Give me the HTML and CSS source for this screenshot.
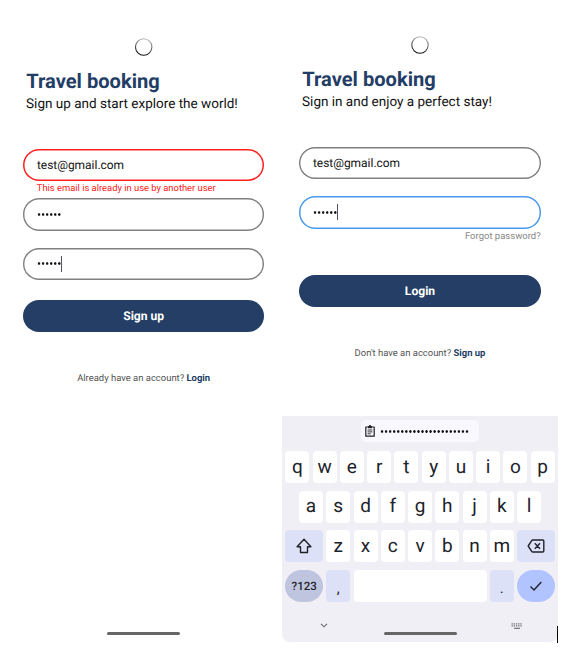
FILE: index.html
```html
<!DOCTYPE html>
<html lang="en">
<head>
<meta charset="utf-8">
<title>Travel booking</title>
<link rel="stylesheet" href="styles.css">
</head>
<body>
<main class="screens">
  <section class="screen signup">
    <svg class="spinner" viewBox="0 0 18 18"><defs><linearGradient id="ring" x1="0.7" y1="0" x2="0.4" y2="1"><stop offset="0" stop-color="#bbb"/><stop offset="1" stop-color="#111"/></linearGradient></defs><circle cx="8.7" cy="9" r="8.2" fill="none" stroke="url(#ring)" stroke-width="1.1"/></svg>
    <h1><span>Travel booking</span></h1>
    <p class="subtitle">Sign up and start explore the world!</p>
    <form class="form">
      <div class="field invalid"><span>test@gmail.com</span></div>
      <p class="error">This email is already in use by another user</p>
      <div class="field"><i class="dots"></i></div>
      <div class="field confirm"><i class="dots"></i><i class="caret"></i></div>
      <div class="button">Sign up</div>
    </form>
    <p class="switch">Already have an account? <b>Login</b></p>
    <i class="home"></i>
  </section>
  <section class="screen login">
    <svg class="spinner" viewBox="0 0 18 18"><circle cx="9" cy="9" r="8.2" fill="none" stroke="url(#ring)" stroke-width="1.1"/></svg>
    <h1><span>Travel booking</span></h1>
    <p class="subtitle">Sign in and enjoy a perfect stay!</p>
    <form class="form">
      <div class="field"><span>test@gmail.com</span></div>
      <div class="field focused"><i class="dots"></i><i class="caret"></i></div>
      <p class="forgot">Forgot password?</p>
      <div class="button">Login</div>
    </form>
    <p class="switch">Don't have an account? <b>Sign up</b></p>
    <div class="keyboard">
      <div class="chip">
        <svg class="clipboard" viewBox="0 0 10 12"><path d="M.8 2h8.4v9.2H.8z" fill="none" stroke="#222" stroke-width="1.2" stroke-linejoin="round"/><path d="M3 1.2h4v2H3z" fill="#222"/><circle cx="5" cy="1.1" r="1.1" fill="#222"/><path d="M2.6 5h4.8M2.6 6.9h4.8M2.6 8.8h3.2" stroke="#222" stroke-width=".9"/></svg>
        <i class="dots long"></i>
      </div>
      <div class="row"><span>q</span><span>w</span><span>e</span><span>r</span><span>t</span><span>y</span><span>u</span><span>i</span><span>o</span><span>p</span></div>
      <div class="row"><span>a</span><span>s</span><span>d</span><span>f</span><span>g</span><span>h</span><span>j</span><span>k</span><span>l</span></div>
      <div class="row">
        <span class="wide tint"><svg width="18" height="18" viewBox="0 0 18 18"><path d="M9 2.3 2.1 9.7h3.4v5.8h7V9.7h3.4z" fill="none" stroke="#20222a" stroke-width="1.4" stroke-linejoin="round"/></svg></span>
        <span>z</span><span>x</span><span>c</span><span>v</span><span>b</span><span>n</span><span>m</span>
        <span class="wide tint"><svg width="18" height="14" viewBox="0 0 18 14"><path d="M5.7 1h10.1q1 0 1 1v10q0 1-1 1H5.7q-.6 0-1-.6L1.2 7l3.5-5.4q.4-.6 1-.6zM7.8 4.3l5.2 5.4M13 4.3 7.8 9.7" fill="none" stroke="#20222a" stroke-width="1.4" stroke-linejoin="round"/></svg></span>
      </div>
      <div class="row">
        <span class="wide mode">?123</span><span class="tint mark">,</span><span class="space"></span><span class="tint mark">.</span>
        <span class="wide enter"><svg width="14" height="12" viewBox="0 0 14 12"><path d="M1.5 6.5 5 10 12.3 2" fill="none" stroke="#20222a" stroke-width="1.4"/></svg></span>
      </div>
      <div class="nav">
        <svg width="8" height="5" viewBox="0 0 8 5"><path d="M1 .8 4 3.8 7 .8" fill="none" stroke="#666" stroke-width="1.1"/></svg>
        <i class="home"></i>
        <svg width="12" height="7" viewBox="0 0 12 7"><path d="M.5 .8h11M.5 2.9h11" fill="none" stroke="#777" stroke-width="1.3" stroke-dasharray="1.4 .8"/><path d="M3 5.3h6" stroke="#666" stroke-width="1.1"/></svg>
      </div>
    </div>
  </section>
  <i class="edge"></i>
</main>
</body>
</html>
```
FILE: styles.css
```css
* { box-sizing: border-box; }
body { margin: 0; background: #fff; font-family: Roboto, "Liberation Sans", sans-serif; color: #111; text-rendering: geometricPrecision; }
h1, p { margin: 0; }
i { display: block; }
.screens { display: flex; height: 651px; overflow: hidden; }
.screen { display: flex; flex-direction: column; height: 651px; }
.signup { width: 282px; padding: 38px 18px 0 23.3px; }
.login { width: 276px; padding-top: 36px; }
.login > :not(.keyboard) { margin-left: 17.3px; margin-right: 17.3px; }
.spinner { width: 18px; height: 18px; flex: none; align-self: center; }
.screen > h1 { margin-top: 13px; padding-left: 3px; height: 25px; line-height: 24px; font-size: 20.1px; font-weight: 700; color: #233e66; white-space: nowrap; }
.subtitle { padding-left: 2.8px; height: 20px; line-height: 20px; font-size: 13.5px; white-space: nowrap; }
.form { margin-top: 34.5px; }
.field { display: flex; align-items: center; height: 32.5px; padding-left: 13.6px; box-shadow: inset 0 0 0 1.4px #808080; border-radius: 16.25px; font-size: 11.95px; }
.invalid { box-shadow: inset 0 0 0 1.5px #ff2020; }
.focused { box-shadow: inset 0 0 0 1.5px #4a9aeb; margin-top: 17.2px; }
.error { height: 17px; line-height: 15px; padding-left: 13.5px; font-size: 9.4px; color: #ff2020; white-space: nowrap; }
.confirm { margin-top: 17.2px; }
.dots { width: 24.3px; height: 3px; background: radial-gradient(circle at 50% 50%, #111 1px, transparent 1.5px) 0 0 / 4.05px 3px repeat-x; }
.caret { width: 1px; height: 16px; background: #554e68; }
.button { display: flex; align-items: center; justify-content: center; height: 32.5px; margin-top: 19.8px; border-radius: 16.25px; background: #243e66; color: #fff; font-size: 12.1px; font-weight: 700; }
.forgot { height: 13px; margin-top: 1.2px; line-height: 13px; text-align: right; font-size: 9.5px; color: #888; }
.login .button { margin-top: 32px; }
.switch { margin-top: 39.5px; height: 14px; line-height: 14px; text-align: center; font-size: 9.45px; color: #555; white-space: nowrap; }
.switch b { color: #233e66; }
.home { width: 73px; height: 3px; border-radius: 2px; background: #666; }
.signup .home { margin: auto auto 15.8px; }
.keyboard { width: 276px; height: 226px; margin: auto 0 9px; padding-top: 4px; border-radius: 0 0 8px 8px; background: #f0eff6; }
.chip { display: flex; align-items: center; width: 118px; height: 22px; margin: 0 auto 9px 79px; padding-left: 4px; border-radius: 5px; background: #f9f8ff; }
.clipboard { width: 10px; height: 12px; margin-right: 5px; }
.long { width: 89.1px; }
.row { display: flex; justify-content: center; gap: 3.25px; height: 32px; margin-bottom: 7.7px; }
.row span { display: flex; align-items: center; justify-content: center; width: 24px; border-radius: 4px; background: #fff; font-size: 19px; line-height: 30px; padding-bottom: 1px; color: #20222a; }
.row .wide { width: 37.6px; padding: 0; }
.row .tint { background: #dde1f8; }
.row .mode { border-radius: 16px; background: #c0c5df; font-size: 11.5px; font-weight: 500; }
.row .mark { padding: 4px 0 0; font-size: 15px; }
.row .space { width: 133px; }
.row .enter { border-radius: 16px; background: #b1c4ff; }
.nav { display: flex; align-items: flex-start; justify-content: space-between; padding: 13.3px 35px 0 37.5px; }
.nav .home { margin: 9.2px 0 0 3px; }
.edge { width: 1px; height: 17px; margin: 626px 0 0 -1px; background: #000; }
```
